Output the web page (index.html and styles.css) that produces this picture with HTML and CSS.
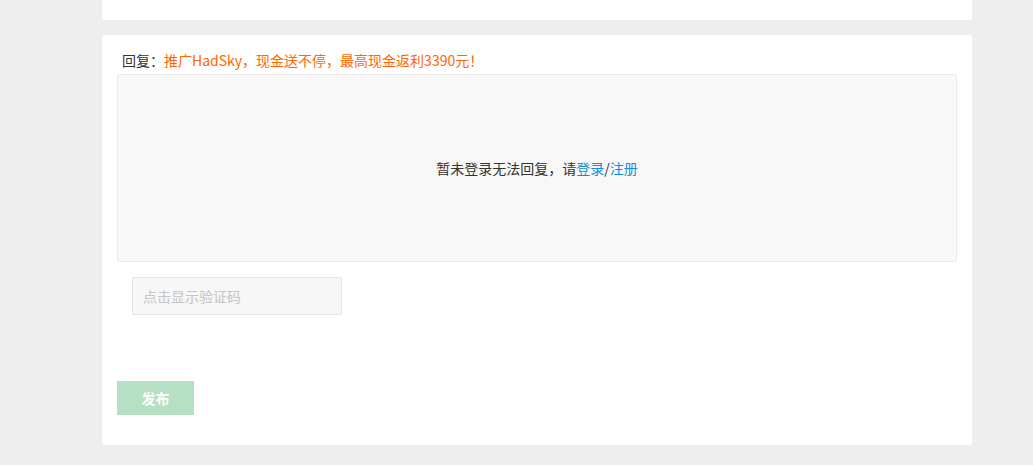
FILE: index.html
```html
<!DOCTYPE html>
<html lang="zh-CN">
<head>
  <meta charset="UTF-8">
  <meta name="viewport" content="width=device-width, initial-scale=1.0">
  <title>回复</title>
  <link rel="stylesheet" href="styles.css">
</head>
<body>
<div class="wrap">
  <div class="card card-top"></div>

  <div class="card reply">
    <div class="reply-title">回复：<span class="promo">推广HadSky，现金送不停，最高现金返利3390元！</span></div>

    <div class="editor">
      暂未登录无法回复，请<a href="#">登录</a>/<a href="#">注册</a>
    </div>

    <div class="captcha">
      <input type="text" placeholder="点击显示验证码" readonly>
    </div>

    <button class="submit">发布</button>
  </div>
</div>
</body>
</html>
```

FILE: styles.css
```css
:root {
  --bg: #eeeeee;
  --card: #ffffff;
  --text: #333333;
  --orange: #ff6600;
  --link: #0e8ed6;
  --border: #e8e8e8;
  --radius: 3px;
}

* {
  margin: 0;
  padding: 0;
  box-sizing: border-box;
}

body {
  font-family: "Noto Sans CJK SC", "Noto Sans", sans-serif;
  font-size: 14px;
  color: var(--text);
  background-color: var(--bg);
}

.wrap {
  width: 870px;
  margin-left: 102px;
  padding-bottom: 20px;
}

.card {
  background-color: var(--card);
  border-radius: var(--radius);
}

.card-top {
  height: 20px;
  border-radius: 0 0 var(--radius) var(--radius);
  margin-bottom: 15px;
}

.reply {
  height: 410px;
  padding: 11px 15px 30px;
}

.reply-title {
  padding-left: 5px;
  line-height: 28px;
  font-size: 14px;
}

.promo {
  color: var(--orange);
}

.editor {
  display: flex;
  align-items: center;
  justify-content: center;
  height: 188px;
  background-color: #f8f8f8;
  border: 1px solid #eaeaea;
  border-radius: var(--radius);
}

.editor a {
  color: var(--link);
  text-decoration: none;
}

.captcha {
  margin: 15px 0 0 15px;
}

.captcha input {
  width: 210px;
  height: 38px;
  padding: 0 10px;
  font-family: inherit;
  font-size: 14px;
  background-color: #f7f7f7;
  border: 1px solid #e4e4e4;
  border-radius: 2px;
  outline: none;
}

.captcha input::placeholder {
  color: #c4c4c4;
}

.submit {
  display: block;
  width: 77px;
  height: 34px;
  margin-top: 66px;
  border: none;
  font-family: inherit;
  font-size: 14px;
  font-weight: bold;
  color: #ffffff;
  background-color: #b7dfc3;
  cursor: pointer;
}
```
